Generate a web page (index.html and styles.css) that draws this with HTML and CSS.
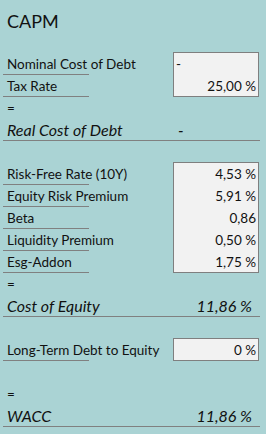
FILE: index.html
```html
<!DOCTYPE html>
<html>
<head>
<meta charset="utf-8">
<link rel="stylesheet" href="styles.css">
</head>
<body>
<div class="sheet">
  <div class="title r1">CAPM</div>

  <div class="box b1"></div>
  <div class="lbl r3">Nominal Cost of Debt</div>
  <div class="val left r3">-</div>
  <div class="lbl r4">Tax Rate</div>
  <div class="val r4">25,00 %</div>

  <div class="eq r5">=</div>
  <div class="res r6">Real Cost of Debt</div>
  <div class="resline r6"></div>
  <div class="resval dash r6">-</div>

  <div class="box b2"></div>
  <div class="lbl r8">Risk-Free Rate (10Y)</div>
  <div class="val r8">4,53 %</div>
  <div class="lbl r9">Equity Risk Premium</div>
  <div class="val r9">5,91 %</div>
  <div class="lbl r10">Beta</div>
  <div class="val r10">0,86</div>
  <div class="lbl r11">Liquidity Premium</div>
  <div class="val r11">0,50 %</div>
  <div class="lbl r12">Esg-Addon</div>
  <div class="val r12">1,75 %</div>

  <div class="eq r13">=</div>
  <div class="res r14">Cost of Equity</div>
  <div class="resline r14"></div>
  <div class="resval r14">11,86 %</div>

  <div class="box b3"></div>
  <div class="lbl r16">Long-Term Debt to Equity</div>
  <div class="val r16">0 %</div>

  <div class="eq r18">=</div>
  <div class="res r19">WACC</div>
  <div class="resline r19"></div>
  <div class="resval r19">11,86 %</div>
</div>
</body>
</html>
```
FILE: styles.css
```css
html, body {
  margin: 0;
  padding: 0;
  background: #aad3d4;
}
body {
  width: 266px;
  height: 434px;
  overflow: hidden;
  font-family: Lato, "Open Sans", sans-serif;
  color: #111111;
  font-size: 13.5px;
}
.sheet {
  display: grid;
  grid-template-columns: 3px 86px 84px 86px 8px;
  grid-auto-rows: 22px;
  padding-top: 9px;
}
.r1 { grid-row: 1; }
.r3 { grid-row: 3; }
.r4 { grid-row: 4; }
.r5 { grid-row: 5; }
.r6 { grid-row: 6; }
.r8 { grid-row: 8; }
.r9 { grid-row: 9; }
.r10 { grid-row: 10; }
.r11 { grid-row: 11; }
.r12 { grid-row: 12; }
.r13 { grid-row: 13; }
.r14 { grid-row: 14; }
.r16 { grid-row: 16; }
.r18 { grid-row: 18; }
.r19 { grid-row: 19; }

.title {
  grid-column: 2 / 5;
  font-size: 18px;
  line-height: 22px;
  padding-left: 4px;
  padding-top: 1px;
}
.lbl {
  grid-column: 2;
  border-bottom: 1px solid #808080;
  white-space: nowrap;
  padding-left: 4px;
  padding-top: 1px;
  line-height: 21px;
  height: 22px;
  box-sizing: border-box;
}
.val {
  grid-column: 4;
  text-align: right;
  padding-right: 3px;
  padding-top: 1px;
  line-height: 21px;
  position: relative;
}
.val.left {
  text-align: left;
  padding-left: 3px;
}
.box {
  grid-column: 4;
  margin-top: -1px;
  border: 1px solid #7f7f7f;
  background: #f2f2f2;
}
.b1 { grid-row: 3 / 5; }
.b2 { grid-row: 8 / 13; }
.b3 { grid-row: 16 / 17; }

.eq {
  grid-column: 2;
  padding-left: 4px;
  line-height: 22px;
}
.res {
  grid-column: 2 / 4;
  font-style: italic;
  font-size: 16px;
  line-height: 22px;
  padding-left: 4px;
  white-space: nowrap;
}
.resline {
  grid-column: 2 / 5;
  border-bottom: 1px solid #808080;
  margin-right: -1px;
}
.resval {
  grid-column: 4;
  font-style: italic;
  font-size: 16px;
  line-height: 22px;
  text-align: right;
  padding-right: 7px;
}
.resval.dash {
  text-align: left;
  padding-left: 5px;
}
```
